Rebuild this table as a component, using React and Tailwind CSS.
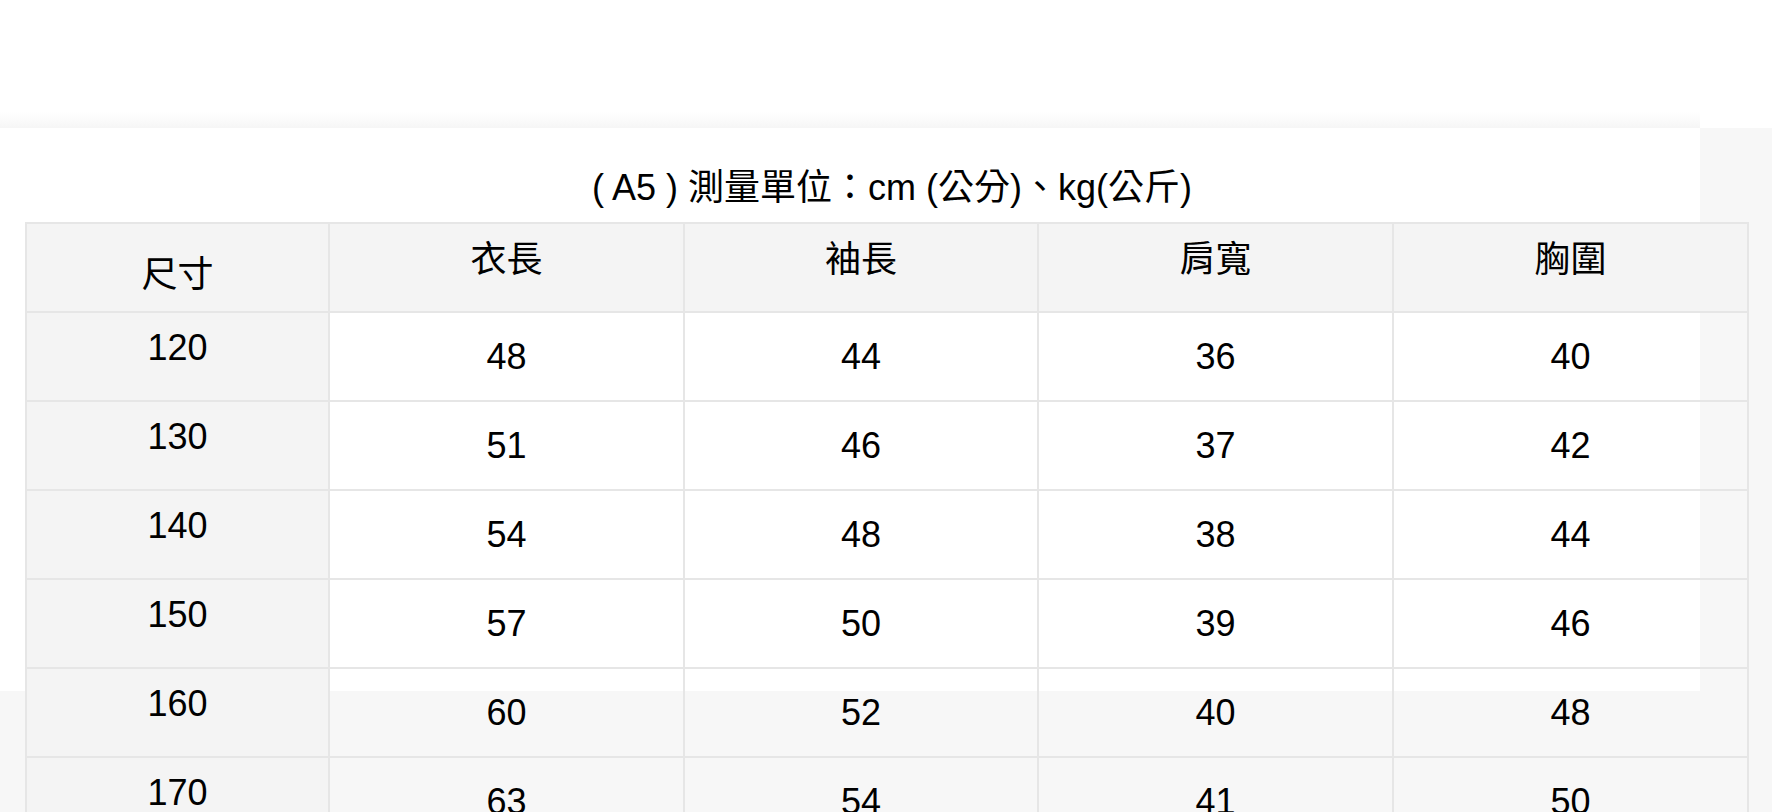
import React from 'react';

const rows = [
    ['120', '48', '44', '36', '40'],
    ['130', '51', '46', '37', '42'],
    ['140', '54', '48', '38', '44'],
    ['150', '57', '50', '39', '46'],
    ['160', '60', '52', '40', '48'],
    ['170', '63', '54', '41', '50'],
];

const headers = ['衣長', '袖長', '肩寬', '胸圍'];

const App = () => {
    return (
        <div
            className="min-h-screen bg-[#f7f7f7] text-black overflow-hidden"
            style={{ fontFamily: '"Liberation Sans", "Noto Sans CJK TC", sans-serif' }}
        >
            {/* top strip with soft shadow band */}
            <div className="h-[128px] bg-white flex flex-col justify-end">
                <div className="w-[1700px] h-[16px] bg-gradient-to-b from-white to-[#f6f6f6]"></div>
            </div>

            {/* white panel, the table runs past its edges */}
            <div className="w-[1700px] h-[563px] bg-white">
                <div className="w-[1722px] ml-[25px] pt-[38px] pb-[12px] pl-[12px] text-center text-[36px] leading-[44px]">
                    ( A5 ) 測量單位：cm (公分)、kg(公斤)
                </div>

                <table className="ml-[25px] w-[1722px] table-fixed border-collapse text-[36px] leading-[40px] text-center">
                    <colgroup>
                        <col className="w-[303px]" />
                        <col className="w-[355px]" />
                        <col className="w-[354px]" />
                        <col className="w-[355px]" />
                        <col className="w-[355px]" />
                    </colgroup>
                    <thead>
                        <tr className="h-[89px] bg-[#f4f4f4]">
                            <th className="border-2 border-[#e6e6e6] font-normal pt-[15px]">尺寸</th>
                            {headers.map((h) => (
                                <th key={h} className="border-2 border-[#e6e6e6] font-normal pb-[15px]">{h}</th>
                            ))}
                        </tr>
                    </thead>
                    <tbody>
                        {rows.map((r) => (
                            <tr key={r[0]} className="h-[89px]">
                                <td className="border-2 border-[#e6e6e6] bg-[#f4f4f4] pb-[18px]">{r[0]}</td>
                                {r.slice(1).map((v, i) => (
                                    <td key={i} className="border-2 border-[#e6e6e6]">{v}</td>
                                ))}
                            </tr>
                        ))}
                    </tbody>
                </table>
            </div>
        </div>
    );
};

export default App;
